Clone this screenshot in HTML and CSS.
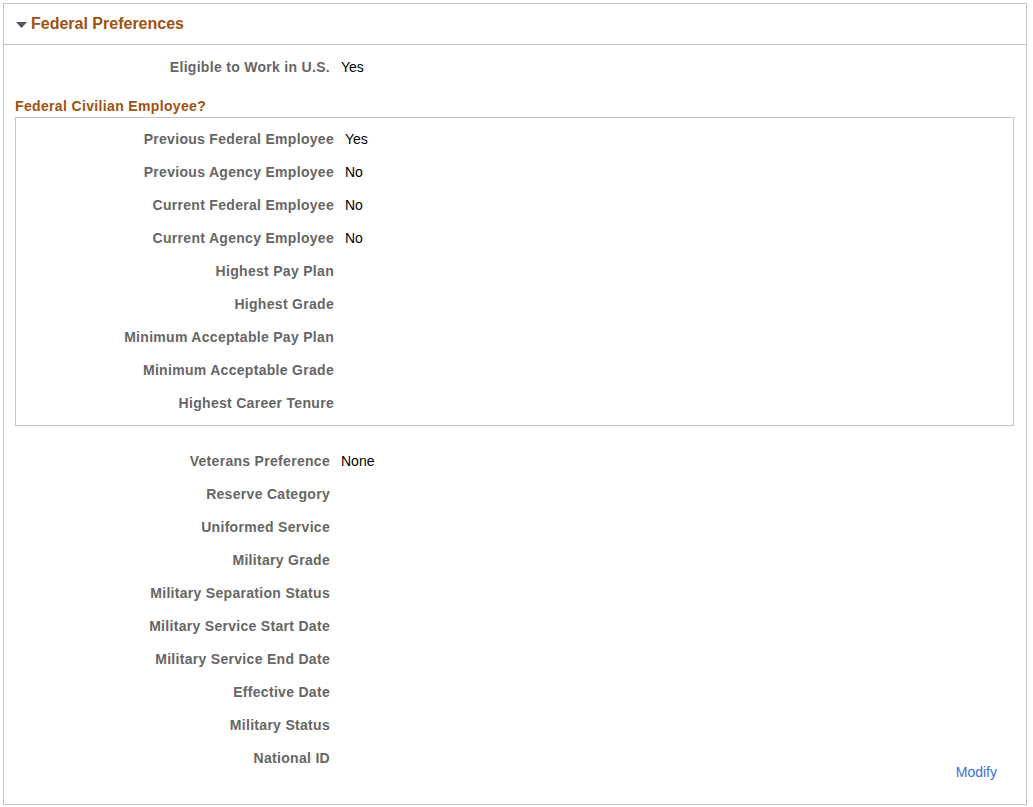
FILE: index.html
```html
<!DOCTYPE html>
<html>
<head>
    <meta charset="UTF-8">
    <title>Federal Preferences</title>
    <link rel="stylesheet" href="styles.css">
</head>
<body>
    <div class="panel">
        <div class="panel-header">
            <svg class="caret" width="11" height="6" viewBox="0 0 11 6"><polygon points="0,0 11,0 5.5,6" fill="#555"/></svg>
            <span class="panel-title">Federal Preferences</span>
        </div>
        <div class="panel-body">
            <div class="row">
                <div class="label">Eligible to Work in U.S.</div>
                <div class="value">Yes</div>
            </div>

            <div class="sub-title">Federal Civilian Employee?</div>
            <div class="sub-box">
                <div class="row">
                    <div class="label">Previous Federal Employee</div>
                    <div class="value">Yes</div>
                </div>
                <div class="row">
                    <div class="label">Previous Agency Employee</div>
                    <div class="value">No</div>
                </div>
                <div class="row">
                    <div class="label">Current Federal Employee</div>
                    <div class="value">No</div>
                </div>
                <div class="row">
                    <div class="label">Current Agency Employee</div>
                    <div class="value">No</div>
                </div>
                <div class="row">
                    <div class="label">Highest Pay Plan</div>
                    <div class="value"></div>
                </div>
                <div class="row">
                    <div class="label">Highest Grade</div>
                    <div class="value"></div>
                </div>
                <div class="row">
                    <div class="label">Minimum Acceptable Pay Plan</div>
                    <div class="value"></div>
                </div>
                <div class="row">
                    <div class="label">Minimum Acceptable Grade</div>
                    <div class="value"></div>
                </div>
                <div class="row">
                    <div class="label">Highest Career Tenure</div>
                    <div class="value"></div>
                </div>
            </div>

            <div class="veterans">
                <div class="row">
                    <div class="label">Veterans Preference</div>
                    <div class="value">None</div>
                </div>
                <div class="row">
                    <div class="label">Reserve Category</div>
                    <div class="value"></div>
                </div>
                <div class="row">
                    <div class="label">Uniformed Service</div>
                    <div class="value"></div>
                </div>
                <div class="row">
                    <div class="label">Military Grade</div>
                    <div class="value"></div>
                </div>
                <div class="row">
                    <div class="label">Military Separation Status</div>
                    <div class="value"></div>
                </div>
                <div class="row">
                    <div class="label">Military Service Start Date</div>
                    <div class="value"></div>
                </div>
                <div class="row">
                    <div class="label">Military Service End Date</div>
                    <div class="value"></div>
                </div>
                <div class="row">
                    <div class="label">Effective Date</div>
                    <div class="value"></div>
                </div>
                <div class="row">
                    <div class="label">Military Status</div>
                    <div class="value"></div>
                </div>
                <div class="row">
                    <div class="label">National ID</div>
                    <div class="value"></div>
                </div>
            </div>

            <div class="actions">
                <a class="link" href="#">Modify</a>
            </div>
        </div>
    </div>
</body>
</html>
```

FILE: styles.css
```css
body {
    margin: 0;
    font-family: 'Liberation Sans', Arial, sans-serif;
    font-size: 14px;
    color: #000;
    background: #fff;
}
.panel {
    margin: 3px 6px 2px 3px;
    border: 1px solid #c4c4c4;
}
.panel-header {
    height: 40px;
    border-bottom: 1px solid #c4c4c4;
    display: flex;
    align-items: center;
    padding-left: 12px;
}
.caret {
    margin-right: 4px;
    margin-top: 1px;
}
.panel-title {
    font-size: 16px;
    font-weight: bold;
    color: #a0510f;
}
.panel-body {
    padding: 5px 0 24px 0;
}
.row {
    display: flex;
    align-items: center;
    height: 33px;
}
.label {
    width: 326px;
    text-align: right;
    font-weight: bold;
    color: #666;
    letter-spacing: 0.3px;
}
.value {
    margin-left: 11px;
}
.sub-title {
    margin: 14px 12px 2px 11px;
    font-weight: bold;
    color: #a0510f;
    line-height: 18px;
    letter-spacing: 0.35px;
}
.sub-box {
    margin: 0 12px 0 11px;
    border: 1px solid #c4c4c4;
    padding: 4px 0 6px 0;
}
.sub-box .label {
    width: 318px;
}
.veterans {
    margin-top: 18px;
}
.actions {
    margin-top: -10px;
    text-align: right;
    padding-right: 29px;
    line-height: 16px;
}
.link {
    color: #3b6fd6;
    text-decoration: none;
}
```
